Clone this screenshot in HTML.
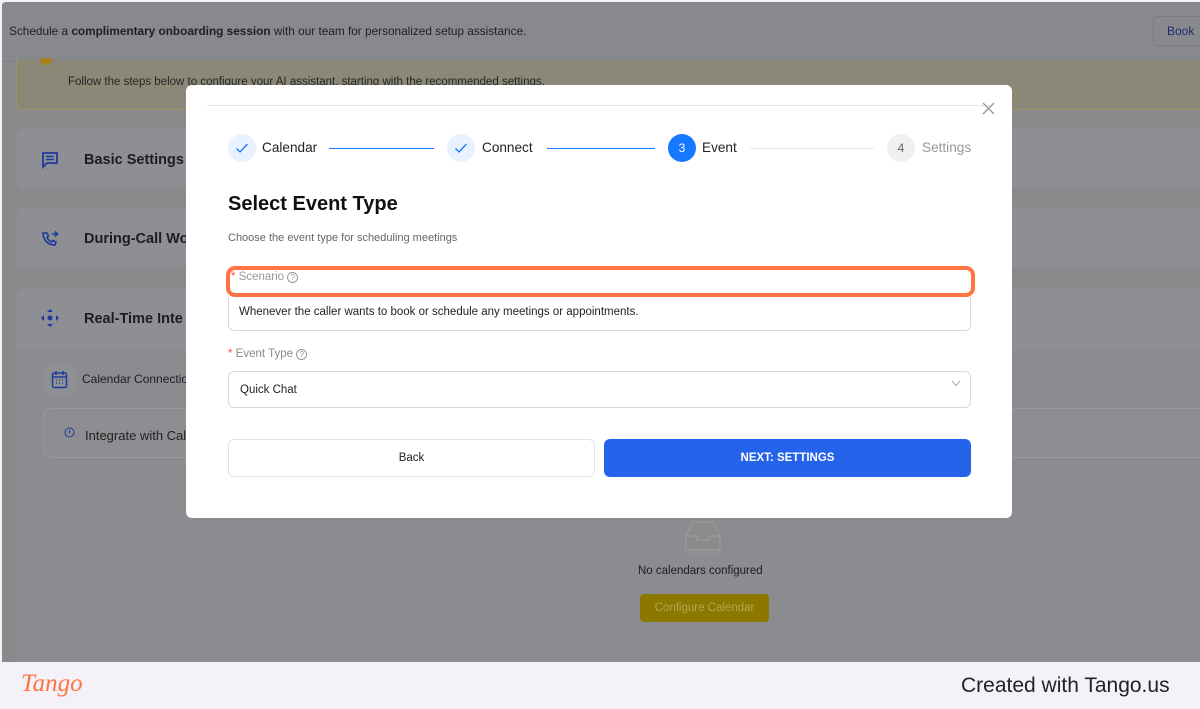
<!DOCTYPE html>
<html><head><meta charset="utf-8"><style>
*{box-sizing:border-box;margin:0;padding:0}
body{width:1200px;height:709px;overflow:hidden;background:#f4f2f8;font-family:"Liberation Sans",sans-serif;position:relative}
.abs{position:absolute}
.app{left:2px;top:2px;width:1198px;height:660px;background:#898a8c;overflow:hidden;border-radius:4px 0 0 0}
.card{background:#8d8f94;border-radius:8px}
.t{color:#1b1d22}
</style></head><body>
<div class="abs app">
  <div class="abs" style="left:0;top:0;width:1198px;height:60px;background:#87898d;border-bottom:1px solid #7f8185"></div>
  <div class="abs t" style="left:7px;top:22px;font-size:11.8px;color:#1e1f22">Schedule a <b>complimentary onboarding session</b> with our team for personalized setup assistance.</div>
  <div class="abs" style="left:1151px;top:14px;width:60px;height:30px;border:1px solid #7a7c80;border-radius:4px;color:#1e2c6a;font-size:12px;padding:7px 0 0 13px">Book</div>
  <div class="abs" style="left:14px;top:58px;width:1200px;height:50px;background:#8b8877;border:1px solid #9c9463;border-top:none;border-radius:0 0 6px 6px"></div>
  <div class="abs" style="left:38px;top:56px;width:12px;height:7px;background:#a8801c;border-radius:0 0 6px 6px"></div>
  <div class="abs" style="left:66px;top:74px;font-size:11.5px;color:#262626">Follow the steps below to configure your AI assistant, starting with the recommended settings.</div>
  <div class="abs card" style="left:14px;top:126px;width:1200px;height:60px"></div>
  <div class="abs card" style="left:14px;top:205px;width:1200px;height:60px"></div>
  <div class="abs card" style="left:14px;top:286px;width:1200px;height:380px;background:#8b8c8f"></div>
  <div class="abs" style="left:14px;top:286px;width:1200px;height:62px;background:#8d8f94;border-radius:8px 8px 0 0"></div>
  <svg class="abs" style="left:38px;top:148px" width="20" height="20" viewBox="0 0 20 20"><path d="M3 3h14v10H7l-4 4z" fill="none" stroke="#1f3a9c" stroke-width="1.8"/><path d="M6 6.5h8M6 9.5h8" stroke="#1f3a9c" stroke-width="1.6"/></svg>
  <div class="abs t" style="left:82px;top:150px;font-size:14.5px;font-weight:bold">Basic Settings</div>
  <svg class="abs" style="left:38px;top:227px" width="20" height="20" viewBox="0 0 20 20"><path d="M3 4c0 7 5 12 12 12l1-3-3-1.5-1.5 1.5c-2-1-3.5-2.5-4.5-4.5L8.5 7 7 4z" fill="none" stroke="#1f3a9c" stroke-width="1.6"/><path d="M12 5h5M15 2.5l2.5 2.5-2.5 2.5" fill="none" stroke="#1f3a9c" stroke-width="1.6"/></svg>
  <div class="abs t" style="left:82px;top:229px;font-size:14.5px;font-weight:bold">During-Call Wo</div>
  <svg class="abs" style="left:38px;top:306px" width="20" height="20" viewBox="0 0 20 20" fill="#1f3a9c"><path d="M10 1l3 3H7zM10 19l3-3H7zM1 10l3-3v6zM19 10l-3-3v6z"/><circle cx="10" cy="10" r="2.5"/></svg>
  <div class="abs t" style="left:82px;top:309px;font-size:14.5px;font-weight:bold">Real-Time Inte</div>
  <div class="abs" style="left:42px;top:362px;width:32px;height:32px;border-radius:8px;background:#8e9094"></div>
  <svg class="abs" style="left:49px;top:368px" width="17" height="19" viewBox="0 0 17 19"><rect x="1.5" y="3" width="14" height="14.5" rx="1.5" fill="none" stroke="#1f3a9c" stroke-width="1.5"/><path d="M1.5 7h14M5 1v4M12 1v4" stroke="#1f3a9c" stroke-width="1.5"/><path d="M5 10h1M8 10h1M11 10h1M5 13h1M8 13h1M11 13h1" stroke="#1f3a9c" stroke-width="1.2"/></svg>
  <div class="abs t" style="left:80px;top:370px;font-size:12px">Calendar Connection</div>
  <div class="abs" style="left:41px;top:406px;width:1200px;height:50px;border:1px solid #97999d;border-radius:8px;background:#8c8e92"></div>
  <svg class="abs" style="left:62px;top:425px" width="11" height="11"><circle cx="5.5" cy="5.5" r="4.5" fill="none" stroke="#1f3a9c" stroke-width="1"/><path d="M5.5 3v3.5" stroke="#1f3a9c"/></svg>
  <div class="abs t" style="left:83px;top:426px;font-size:13px;color:#222">Integrate with Calendar</div>
  <svg class="abs" style="left:675px;top:518px" width="52" height="36" viewBox="0 0 52 36"><ellipse cx="26" cy="32" rx="20" ry="3" fill="#8f9093"/><path d="M9 16 16 2h20l7 14v14H9z" fill="#8b8b8b" stroke="#999a9c" stroke-width="1.2"/><path d="M9 16h11v4h12v-4h11" fill="none" stroke="#999a9c" stroke-width="1.2"/></svg>
  <div class="abs t" style="left:636px;top:563px;font-size:11.5px">No calendars configured</div>
  <div class="abs" style="left:638px;top:592px;width:129px;height:28px;background:#8c7700;border-radius:4px;color:#b5a451;font-size:11.5px;text-align:center;line-height:28px">Configure Calendar</div>
</div>

<div class="abs" style="left:186px;top:85px;width:826px;height:433px;background:#fff;border-radius:6px"></div>
<div class="abs" style="left:207px;top:105px;width:783px;height:1px;background:#e6e6e6"></div>
<svg class="abs" style="left:982px;top:102px" width="13" height="13"><path d="M1 1l11 11M12 1 1 12" stroke="#999" stroke-width="1.3"/></svg>

<div class="abs" style="left:228px;top:134px;width:28px;height:28px;border-radius:50%;background:#e8f1fe"></div>
<svg class="abs" style="left:235px;top:142px" width="14" height="12"><path d="M1.5 6.5 5 10l7.5-8" fill="none" stroke="#1677ff" stroke-width="1.3"/></svg>
<div class="abs" style="left:262px;top:140px;font-size:13.6px;color:#222">Calendar</div>
<div class="abs" style="left:329px;top:148px;width:105px;height:1px;background:#1677ff"></div>
<div class="abs" style="left:447px;top:134px;width:28px;height:28px;border-radius:50%;background:#e8f1fe"></div>
<svg class="abs" style="left:454px;top:142px" width="14" height="12"><path d="M1.5 6.5 5 10l7.5-8" fill="none" stroke="#1677ff" stroke-width="1.3"/></svg>
<div class="abs" style="left:482px;top:140px;font-size:13.6px;color:#222">Connect</div>
<div class="abs" style="left:547px;top:148px;width:108px;height:1px;background:#1677ff"></div>
<div class="abs" style="left:668px;top:134px;width:28px;height:28px;border-radius:50%;background:#1677ff;color:#fff;font-size:12px;text-align:center;line-height:28px">3</div>
<div class="abs" style="left:702px;top:140px;font-size:13.6px;color:#222">Event</div>
<div class="abs" style="left:750px;top:148px;width:124px;height:1px;background:#e8e8e8"></div>
<div class="abs" style="left:887px;top:134px;width:28px;height:28px;border-radius:50%;background:#f0f0f0;color:#666;font-size:12px;text-align:center;line-height:28px">4</div>
<div class="abs" style="left:922px;top:140px;font-size:13.6px;color:#999">Settings</div>

<div class="abs" style="left:228px;top:193px;font-size:20px;font-weight:bold;color:#111">Select Event Type</div>
<div class="abs" style="left:228px;top:232px;font-size:11px;color:#666">Choose the event type for scheduling meetings</div>

<div class="abs" style="left:231px;top:271px;font-size:11.5px;color:#999"><span style="color:#ff4d4f">*</span> Scenario <span style="display:inline-block;width:11px;height:11px;border:1px solid #999;border-radius:50%;font-size:8px;text-align:center;line-height:9px;vertical-align:0">?</span></div>
<div class="abs" style="left:226px;top:266px;width:749px;height:31px;border:4px solid #ff7442;border-radius:9px"></div>
<div class="abs" style="left:228px;top:297px;width:743px;height:34px;border:1px solid #d9d9d9;border-top:none;border-radius:0 0 6px 6px;font-size:11.5px;color:#222;padding:9px 0 0 10px">Whenever the caller wants to book or schedule any meetings or appointments.</div>

<div class="abs" style="left:228px;top:348px;font-size:11.5px;color:#888"><span style="color:#ff4d4f">*</span> Event Type <span style="display:inline-block;width:11px;height:11px;border:1px solid #999;border-radius:50%;font-size:8px;text-align:center;line-height:9px;vertical-align:0">?</span></div>
<div class="abs" style="left:228px;top:371px;width:743px;height:37px;border:1px solid #d9d9d9;border-radius:6px;font-size:11.5px;color:#222;padding:12px 0 0 11px">Quick Chat</div>
<svg class="abs" style="left:951px;top:380px" width="10" height="7"><path d="M1 1l4 4.5L9 1" fill="none" stroke="#aaa" stroke-width="1"/></svg>

<div class="abs" style="left:228px;top:439px;width:367px;height:38px;border:1px solid #e3e3e3;border-radius:6px;font-size:11.5px;color:#222;text-align:center;line-height:37px">Back</div>
<div class="abs" style="left:604px;top:439px;width:367px;height:38px;background:#2563eb;border-radius:6px;font-size:11.5px;color:#fff;font-weight:bold;text-align:center;line-height:38px">NEXT: SETTINGS</div>

<div class="abs" style="left:21px;top:670px;font-family:'Liberation Serif',serif;font-style:italic;font-size:25px;color:#ff7442">Tango</div>
<div class="abs" style="left:961px;top:674px;font-size:21px;color:#222">Created with Tango.us</div>
</body></html>
